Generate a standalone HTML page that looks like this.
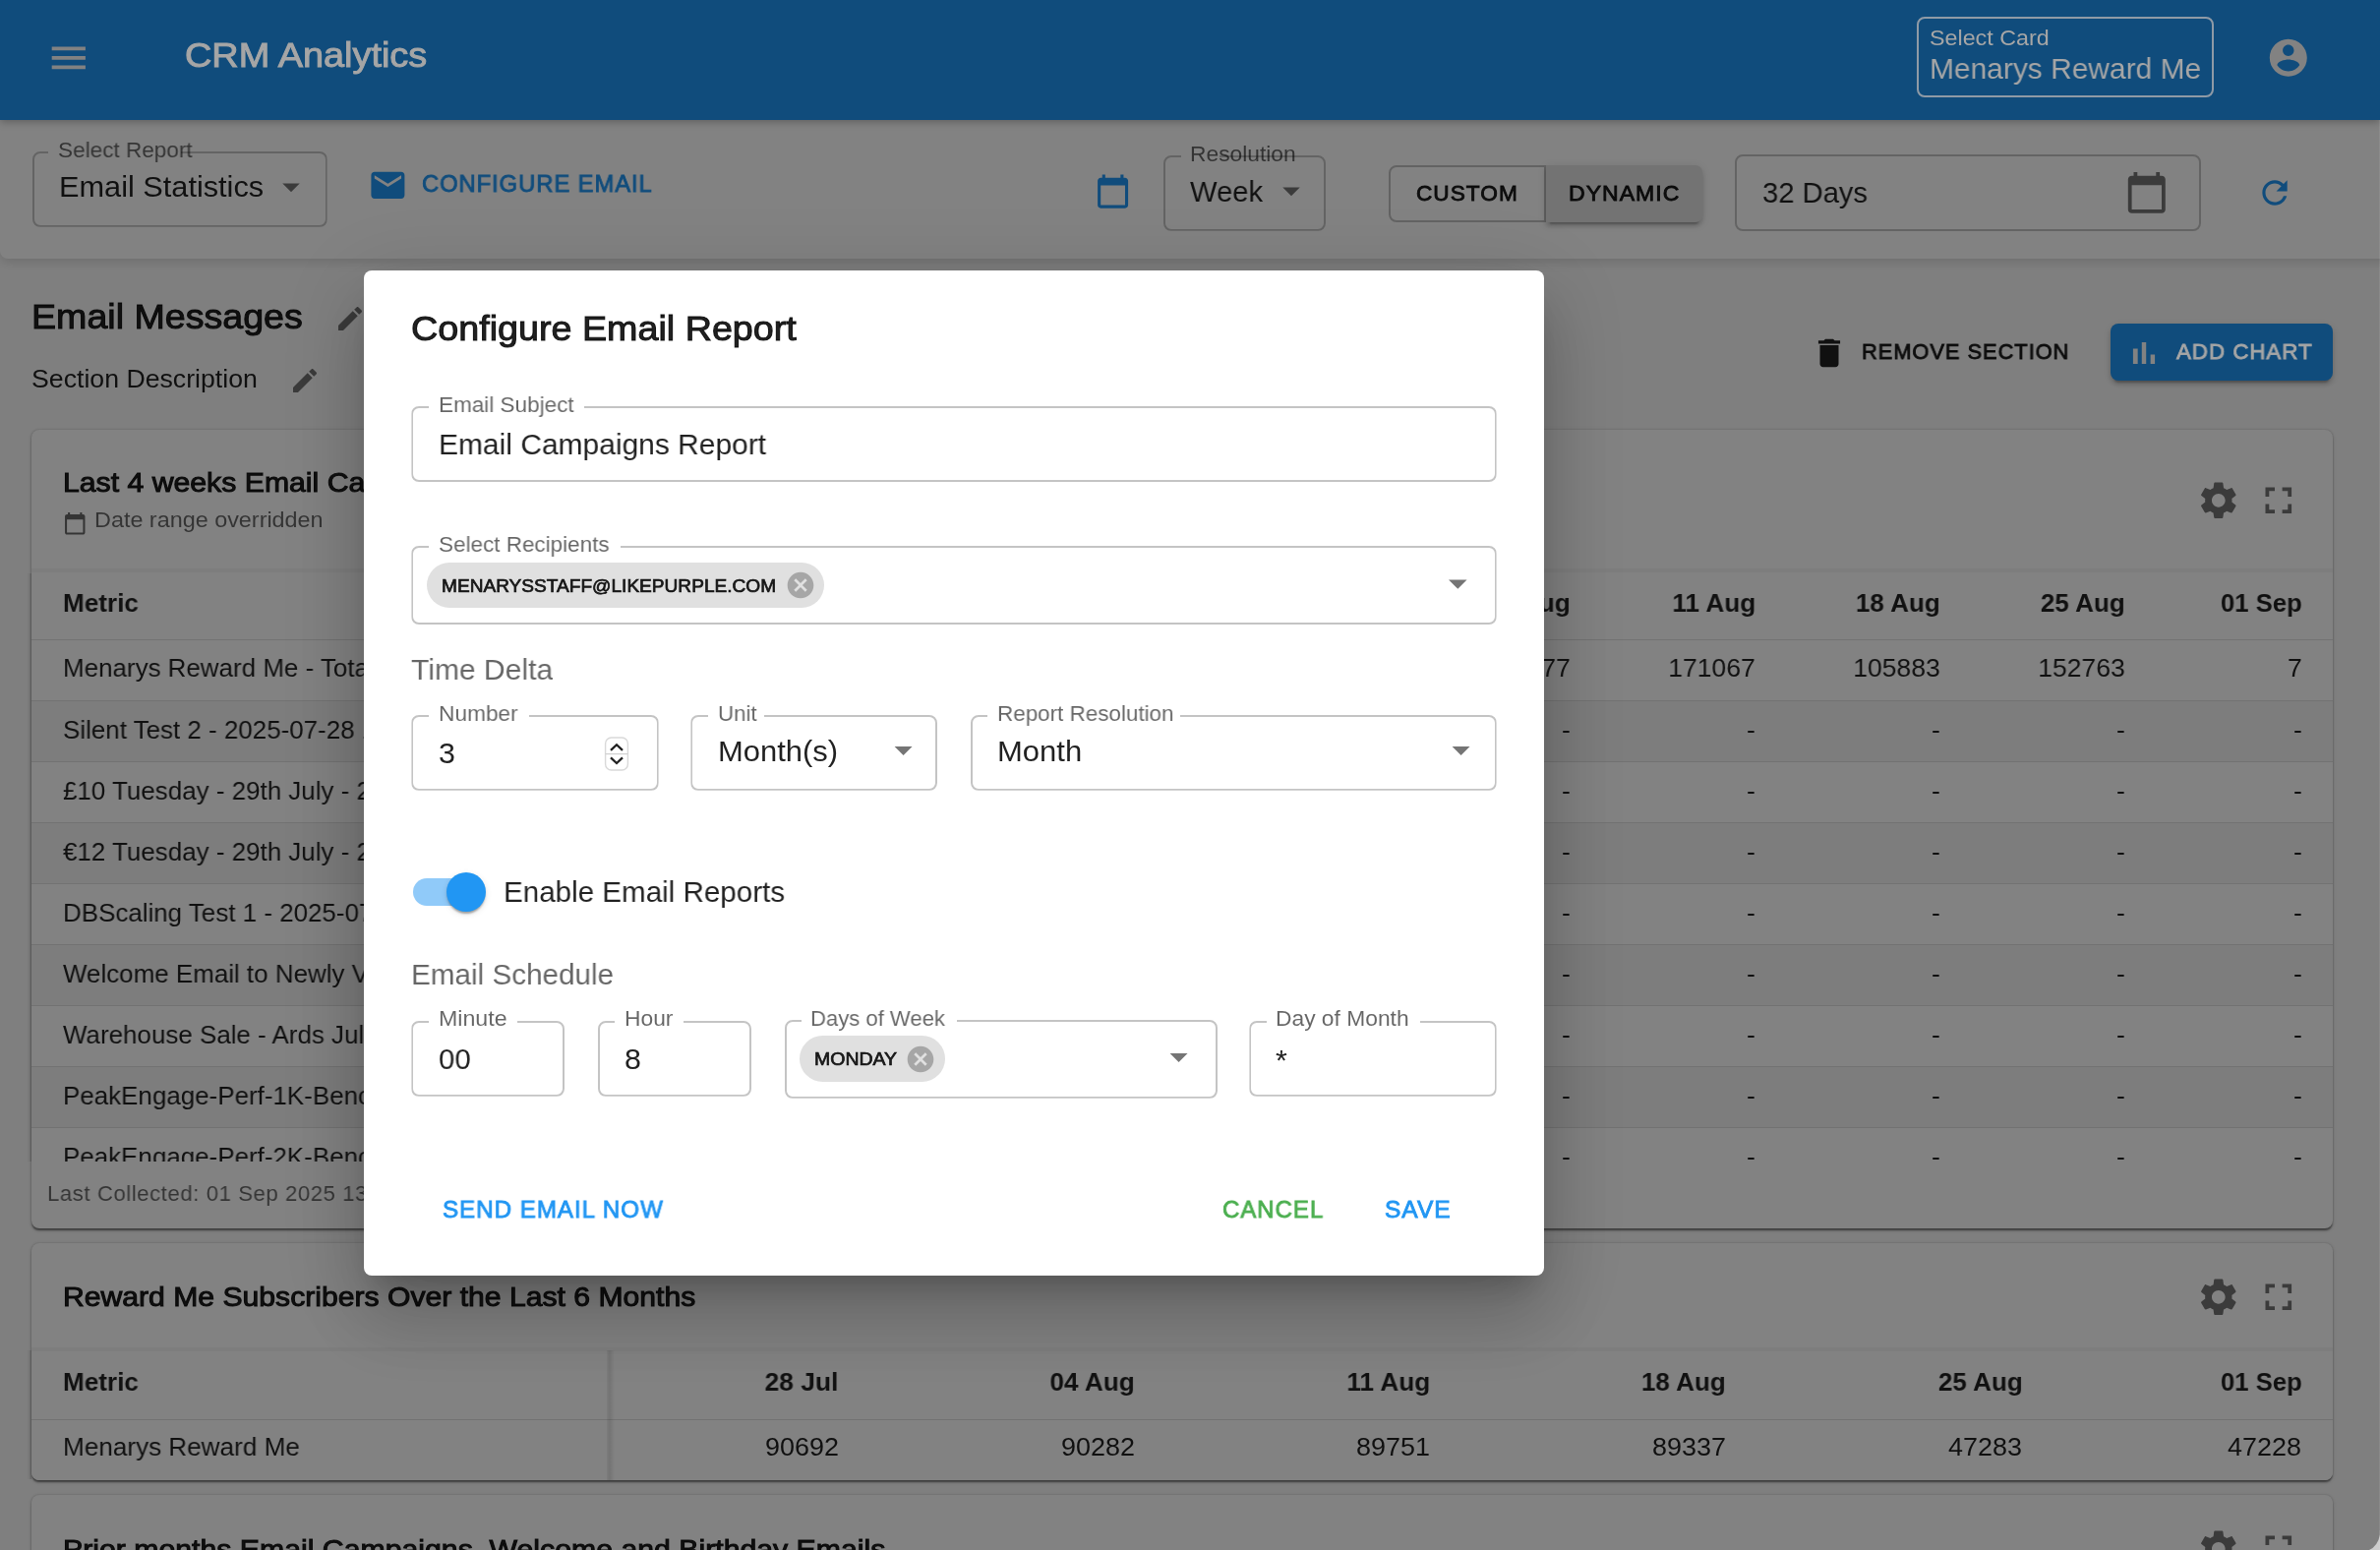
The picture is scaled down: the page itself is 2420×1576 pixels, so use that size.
<!DOCTYPE html>
<html lang="en"><head><meta charset="utf-8"><title>CRM Analytics</title><style>
html,body{margin:0;padding:0}
body{width:2420px;height:1576px;overflow:hidden;position:relative;background:#fafafa;font-family:"Liberation Sans",sans-serif}
#bg,#backdrop{position:absolute;left:0;top:0;width:2420px;height:1576px;overflow:hidden}
#backdrop{background:rgba(0,0,0,.492)}
div,svg,span{position:absolute}
.t{white-space:nowrap;line-height:1;display:block;will-change:transform}
.clip{overflow:hidden}
</style></head>
<body>
<div id="bg">
<div style="left:0.00px;top:122.00px;width:2440.00px;height:141.00px;background:#fff;border-radius:0 0 8px 8px;box-shadow:0 3px 12px 0 rgba(0,0,0,.15);"></div>
<div style="left:0.00px;top:0.00px;width:2420.00px;height:122.00px;background:#2196f3;box-shadow:0 2px 8px 0 rgba(0,0,0,.28);"></div>
<svg style="left:47.30px;top:35.60px" width="45.60" height="45.60" viewBox="0 0 24 24" fill="#fff"><path d="M3 18h18v-2H3v2zm0-5h18v-2H3v2zm0-7v2h18V6H3z"/></svg>
<svg style="left:2303.50px;top:35.50px" width="45.60" height="45.60" viewBox="0 0 24 24" fill="#fff"><path d="M12 2C6.48 2 2 6.48 2 12s4.48 10 10 10 10-4.48 10-10S17.52 2 12 2zm0 3c1.66 0 3 1.34 3 3s-1.34 3-3 3-3-1.34-3-3 1.34-3 3-3zm0 14.2c-2.5 0-4.71-1.28-6-3.22.03-1.99 4-3.08 6-3.08 1.99 0 5.97 1.09 6 3.08-1.29 1.94-3.5 3.22-6 3.22z"/></svg>
<div style="left:32.60px;top:153.80px;width:300.00px;height:77.00px;box-sizing:border-box;border:2px solid rgba(0,0,0,.23);border-radius:8px;clip-path:polygon(0 0,16.4px 0,16.4px 3px,151.4px 3px,151.4px 0,100% 0,100% 100%,0 100%);"></div>
<span class="t" style="top:140.70px;font-size:22.8px;color:rgba(0,0,0,.6);left:58.70px;transform-origin:0 0;transform:scaleX(0.9888);">Select Report</span>
<span class="t" style="top:174.27px;font-size:30.4px;color:rgba(0,0,0,.87);left:59.70px;transform-origin:0 0;transform:scaleX(1.0103);">Email Statistics</span>
<svg style="left:275.35px;top:168.90px" width="42.00" height="42.00" viewBox="0 0 24 24" fill="rgba(0,0,0,.54)"><path d="M7 10l5 5 5-5z"/></svg>
<svg style="left:373.60px;top:167.60px" width="40.80" height="40.80" viewBox="0 0 24 24" fill="#2196f3"><path d="M20 4H4c-1.1 0-1.99.9-1.99 2L2 18c0 1.1.9 2 2 2h16c1.1 0 2-.9 2-2V6c0-1.1-.9-2-2-2zm0 4l-8 5-8-5V6l8 5 8-5v2z"/></svg>
<span class="t" style="top:175.21px;font-size:24.56px;color:#2196f3;-webkit-text-stroke:0.85px;letter-spacing:1px;left:428.70px;transform-origin:0 0;transform:scaleX(0.9670);">CONFIGURE EMAIL</span>
<svg style="left:1112.90px;top:176.45px" width="37.20" height="37.20" viewBox="0 0 24 24" fill="#2196f3"><path d="M20 3h-1V1h-2v2H7V1H5v2H4c-1.1 0-2 .9-2 2v16c0 1.1.9 2 2 2h16c1.1 0 2-.9 2-2V5c0-1.1-.9-2-2-2zm0 18H4V8h16v13z"/></svg>
<div style="left:1183.00px;top:157.80px;width:165.00px;height:77.00px;box-sizing:border-box;border:2px solid rgba(0,0,0,.23);border-radius:8px;clip-path:polygon(0 0,18.0px 0,18.0px 3px,57.0px 3px,57.0px 0,100% 0,100% 100%,0 100%);"></div>
<span class="t" style="top:144.70px;font-size:22.8px;color:rgba(0,0,0,.6);left:1209.70px;transform-origin:0 0;transform:scaleX(0.9988);">Resolution</span>
<span class="t" style="top:178.87px;font-size:30.4px;color:rgba(0,0,0,.87);left:1209.70px;transform-origin:0 0;transform:scaleX(0.9598);">Week</span>
<svg style="left:1291.75px;top:172.90px" width="42.00" height="42.00" viewBox="0 0 24 24" fill="rgba(0,0,0,.54)"><path d="M7 10l5 5 5-5z"/></svg>
<div style="left:1412.00px;top:167.60px;width:160.00px;height:58.00px;box-sizing:border-box;border:2px solid rgba(0,0,0,.24);border-radius:8px 0 0 8px;"></div>
<div style="left:1572.00px;top:167.60px;width:159.30px;height:58.80px;background:#e2e2e2;border-radius:0 7px 7px 0;box-shadow:0 6px 2px -4px rgba(0,0,0,.2),0 4px 4px 0 rgba(0,0,0,.14),0 2px 10px 0 rgba(0,0,0,.12);"></div>
<span class="t" style="top:184.82px;font-size:22.66px;color:rgba(0,0,0,.87);-webkit-text-stroke:0.85px;letter-spacing:1px;left:1439.70px;transform-origin:0 0;transform:scaleX(0.9957);">CUSTOM</span>
<span class="t" style="top:184.82px;font-size:22.66px;color:rgba(0,0,0,.87);-webkit-text-stroke:0.85px;letter-spacing:1px;left:1595.10px;transform-origin:0 0;transform:scaleX(1.0170);">DYNAMIC</span>
<div style="left:1764.00px;top:157.20px;width:474.40px;height:77.60px;box-sizing:border-box;border:2px solid rgba(0,0,0,.23);border-radius:8px;"></div>
<span class="t" style="top:179.87px;font-size:30.4px;color:rgba(0,0,0,.87);left:1791.70px;transform-origin:0 0;transform:scaleX(0.9600);">32 Days</span>
<svg style="left:2160.20px;top:173.10px" width="45.60" height="45.60" viewBox="0 0 24 24" fill="rgba(0,0,0,.54)"><path d="M20 3h-1V1h-2v2H7V1H5v2H4c-1.1 0-2 .9-2 2v16c0 1.1.9 2 2 2h16c1.1 0 2-.9 2-2V5c0-1.1-.9-2-2-2zm0 18H4V8h16v13z"/></svg>
<svg style="left:2293.70px;top:176.70px" width="38.00" height="38.00" viewBox="0 0 24 24" fill="#2196f3"><path d="M17.65 6.35C16.2 4.9 14.21 4 12 4c-4.42 0-7.99 3.58-7.99 8s3.57 8 7.99 8c3.73 0 6.84-2.55 7.73-6h-2.08c-.82 2.33-3.04 4-5.65 4-3.31 0-6-2.69-6-6s2.69-6 6-6c1.66 0 3.14.69 4.22 1.78L13 11h7V4l-2.35 2.35z"/></svg>
<span class="t" style="top:304.86px;font-size:35.6px;color:rgba(0,0,0,.87);-webkit-text-stroke:1.0px;left:31.70px;transform-origin:0 0;transform:scaleX(1.0567);">Email Messages</span>
<svg style="left:339.60px;top:308.00px" width="32.00" height="32.00" viewBox="0 0 24 24" fill="rgba(0,0,0,.54)"><path d="M3 17.25V21h3.75L17.81 9.94l-3.75-3.75L3 17.25zM20.71 7.04c.39-.39.39-1.02 0-1.41l-2.34-2.34c-.39-.39-1.02-.39-1.41 0l-1.83 1.83 3.75 3.75 1.83-1.83z"/></svg>
<span class="t" style="top:372.48px;font-size:26.6px;color:rgba(0,0,0,.87);left:31.70px;transform-origin:0 0;transform:scaleX(1.0032);">Section Description</span>
<svg style="left:293.60px;top:371.00px" width="32.00" height="32.00" viewBox="0 0 24 24" fill="rgba(0,0,0,.54)"><path d="M3 17.25V21h3.75L17.81 9.94l-3.75-3.75L3 17.25zM20.71 7.04c.39-.39.39-1.02 0-1.41l-2.34-2.34c-.39-.39-1.02-.39-1.41 0l-1.83 1.83 3.75 3.75 1.83-1.83z"/></svg>
<svg style="left:1841.40px;top:339.75px" width="38.00" height="38.00" viewBox="0 0 24 24" fill="rgba(0,0,0,.87)"><path d="M6 19c0 1.1.9 2 2 2h8c1.1 0 2-.9 2-2V7H6v12zM19 4h-3.5l-1-1h-5l-1 1H5v2h14V4z"/></svg>
<span class="t" style="top:345.82px;font-size:22.66px;color:rgba(0,0,0,.87);-webkit-text-stroke:0.85px;letter-spacing:1px;left:1892.70px;transform-origin:0 0;transform:scaleX(0.9641);">REMOVE SECTION</span>
<div style="left:2146.00px;top:329.00px;width:226.00px;height:57.70px;background:#2196f3;border-radius:8px;box-shadow:0 6px 2px -4px rgba(0,0,0,.2),0 4px 4px 0 rgba(0,0,0,.14),0 2px 10px 0 rgba(0,0,0,.12);"></div>
<svg style="left:2161.10px;top:339.60px" width="38.00" height="38.00" viewBox="0 0 24 24" fill="#fff"><path d="M5 9.2h3V19H5zM10.6 5h2.8v14h-2.8zm5.6 8H19v6h-2.8z"/></svg>
<div style="left:32.00px;top:437.00px;width:2340.00px;height:812.00px;background:#fff;border-radius:8px;box-shadow:0 3.8px 1.9px -1.9px rgba(0,0,0,.3),0 1.9px 1.9px 0 rgba(0,0,0,.2),0 1.9px 5.7px 0 rgba(0,0,0,.14),0 0 1.5px .5px rgba(0,0,0,.05);"></div>
<span class="t" style="top:477.30px;font-size:28.0px;color:rgba(0,0,0,.87);-webkit-text-stroke:1.0px;left:64.00px;transform-origin:0 0;transform:scaleX(1.0790);">Last 4 weeks Email Ca</span>
<span class="t" style="top:477.30px;font-size:28.0px;color:rgba(0,0,0,.87);-webkit-text-stroke:1.0px;left:370.70px;transform-origin:0 0;">mpaigns</span>
<svg style="left:64.00px;top:520.00px" width="24.50" height="24.50" viewBox="0 0 24 24" fill="rgba(0,0,0,.6)"><path d="M20 3h-1V1h-2v2H7V1H5v2H4c-1.1 0-2 .9-2 2v16c0 1.1.9 2 2 2h16c1.1 0 2-.9 2-2V5c0-1.1-.9-2-2-2zm0 18H4V8h16v13z"/></svg>
<span class="t" style="top:518.38px;font-size:22px;color:rgba(0,0,0,.6);left:95.70px;transform-origin:0 0;transform:scaleX(1.0626);">Date range overridden</span>
<svg style="left:2233.20px;top:485.70px" width="45.60" height="45.60" viewBox="0 0 24 24" fill="rgba(0,0,0,.54)"><path d="M19.14 12.94c.04-.3.06-.61.06-.94 0-.32-.02-.64-.07-.94l2.03-1.58c.18-.14.23-.41.12-.61l-1.92-3.32c-.12-.22-.37-.29-.59-.22l-2.39.96c-.5-.38-1.03-.7-1.62-.94l-.36-2.54c-.04-.24-.24-.41-.48-.41h-3.84c-.24 0-.43.17-.47.41l-.36 2.54c-.59.24-1.13.57-1.62.94l-2.39-.96c-.22-.08-.47 0-.59.22L2.74 8.87c-.12.21-.08.47.12.61l2.03 1.58c-.05.3-.09.63-.09.94s.02.64.07.94l-2.03 1.58c-.18.14-.23.41-.12.61l1.92 3.32c.12.22.37.29.59.22l2.39-.96c.5.38 1.03.7 1.62.94l.36 2.54c.05.24.24.41.48.41h3.84c.24 0 .44-.17.47-.41l.36-2.54c.59-.24 1.13-.56 1.62-.94l2.39.96c.22.08.47 0 .59-.22l1.92-3.32c.12-.22.07-.47-.12-.61l-2.01-1.58zM12 15.6c-1.98 0-3.6-1.62-3.6-3.6s1.62-3.6 3.6-3.6 3.6 1.62 3.6 3.6-1.62 3.6-3.6 3.6z"/></svg>
<svg style="left:2294.40px;top:486.10px" width="45.60" height="45.60" viewBox="0 0 24 24" fill="rgba(0,0,0,.54)"><path d="M7 14H5v5h5v-2H7v-3zm-2-4h2V7h3V5H5v5zm12 7h-3v2h5v-5h-2v3zM14 5v2h3v3h2V5h-5z"/></svg>
<div class="clip" style="left:32px;top:578px;width:2340px;height:603px">
<div style="left:0.00px;top:0.20px;width:2340.00px;height:3.60px;background:#f6f6f6;"></div>
<div style="left:0.00px;top:3.80px;width:2340.00px;height:69.20px;background:#fff;border-bottom:1.9px solid #e0e0e0;box-sizing:border-box;"></div>
<div style="left:0.00px;top:73.00px;width:2340.00px;height:62.05px;background:#fff;border-bottom:1.9px solid #e0e0e0;box-sizing:border-box;"></div>
<div style="left:0.00px;top:135.05px;width:2340.00px;height:62.05px;background:#f5f5f5;border-bottom:1.9px solid #e0e0e0;box-sizing:border-box;"></div>
<div style="left:0.00px;top:197.10px;width:2340.00px;height:62.05px;background:#fff;border-bottom:1.9px solid #e0e0e0;box-sizing:border-box;"></div>
<div style="left:0.00px;top:259.15px;width:2340.00px;height:62.05px;background:#f5f5f5;border-bottom:1.9px solid #e0e0e0;box-sizing:border-box;"></div>
<div style="left:0.00px;top:321.20px;width:2340.00px;height:62.05px;background:#fff;border-bottom:1.9px solid #e0e0e0;box-sizing:border-box;"></div>
<div style="left:0.00px;top:383.25px;width:2340.00px;height:62.05px;background:#f5f5f5;border-bottom:1.9px solid #e0e0e0;box-sizing:border-box;"></div>
<div style="left:0.00px;top:445.30px;width:2340.00px;height:62.05px;background:#fff;border-bottom:1.9px solid #e0e0e0;box-sizing:border-box;"></div>
<div style="left:0.00px;top:507.35px;width:2340.00px;height:62.05px;background:#f5f5f5;border-bottom:1.9px solid #e0e0e0;box-sizing:border-box;"></div>
<div style="left:0.00px;top:569.40px;width:2340.00px;height:62.05px;background:#fff;border-bottom:1.9px solid #e0e0e0;box-sizing:border-box;"></div>
</div>
<div style="left:27.00px;top:583.00px;width:5.00px;height:598.00px;background:linear-gradient(90deg,rgba(0,0,0,0),rgba(0,0,0,.04) 50%,rgba(0,0,0,.17));"></div>
<span class="t" style="top:600.48px;font-size:26.6px;color:rgba(0,0,0,.87);font-weight:700;left:63.70px;transform-origin:0 0;transform:scaleX(0.9808);">Metric</span>
<span class="t" style="top:600.48px;font-size:26.6px;color:rgba(0,0,0,.87);font-weight:700;right:823.20px;transform-origin:100% 0;transform:scaleX(0.9834);">04 Aug</span>
<span class="t" style="top:600.48px;font-size:26.6px;color:rgba(0,0,0,.87);font-weight:700;right:635.20px;transform-origin:100% 0;transform:scaleX(0.9839);">11 Aug</span>
<span class="t" style="top:600.48px;font-size:26.6px;color:rgba(0,0,0,.87);font-weight:700;right:447.10px;transform-origin:100% 0;transform:scaleX(0.9787);">18 Aug</span>
<span class="t" style="top:600.48px;font-size:26.6px;color:rgba(0,0,0,.87);font-weight:700;right:259.00px;transform-origin:100% 0;transform:scaleX(0.9787);">25 Aug</span>
<span class="t" style="top:600.48px;font-size:26.6px;color:rgba(0,0,0,.87);font-weight:700;right:79.00px;transform-origin:100% 0;transform:scaleX(0.9656);">01 Sep</span>
<div class="clip" style="left:0;top:651.00px;width:2420px;height:62.05px">
<span class="t" style="top:15.48px;font-size:26.6px;color:rgba(0,0,0,.87);left:63.70px;transform-origin:0 0;transform:scaleX(.9755);">Menarys Reward Me - Total Emails</span>
<span class="t" style="top:15.48px;font-size:26.6px;color:rgba(0,0,0,.87);right:823.20px;transform-origin:100% 0;transform:scaleX(0.9967);">190377</span>
<span class="t" style="top:15.48px;font-size:26.6px;color:rgba(0,0,0,.87);right:635.20px;transform-origin:100% 0;transform:scaleX(0.9967);">171067</span>
<span class="t" style="top:15.48px;font-size:26.6px;color:rgba(0,0,0,.87);right:447.10px;transform-origin:100% 0;transform:scaleX(0.9967);">105883</span>
<span class="t" style="top:15.48px;font-size:26.6px;color:rgba(0,0,0,.87);right:259.00px;transform-origin:100% 0;transform:scaleX(0.9967);">152763</span>
<span class="t" style="top:15.48px;font-size:26.6px;color:rgba(0,0,0,.87);right:79.00px;transform-origin:100% 0;">7</span>
</div>
<div class="clip" style="left:0;top:713.05px;width:2420px;height:62.05px">
<span class="t" style="top:15.48px;font-size:26.6px;color:rgba(0,0,0,.87);left:63.70px;transform-origin:0 0;transform:scaleX(.9755);">Silent Test 2 - 2025-07-28 10:00</span>
<span class="t" style="top:15.48px;font-size:26.6px;color:rgba(0,0,0,.87);right:823.20px;transform-origin:100% 0;">-</span>
<span class="t" style="top:15.48px;font-size:26.6px;color:rgba(0,0,0,.87);right:635.20px;transform-origin:100% 0;">-</span>
<span class="t" style="top:15.48px;font-size:26.6px;color:rgba(0,0,0,.87);right:447.10px;transform-origin:100% 0;">-</span>
<span class="t" style="top:15.48px;font-size:26.6px;color:rgba(0,0,0,.87);right:259.00px;transform-origin:100% 0;">-</span>
<span class="t" style="top:15.48px;font-size:26.6px;color:rgba(0,0,0,.87);right:79.00px;transform-origin:100% 0;">-</span>
</div>
<div class="clip" style="left:0;top:775.10px;width:2420px;height:62.05px">
<span class="t" style="top:15.48px;font-size:26.6px;color:rgba(0,0,0,.87);left:63.70px;transform-origin:0 0;transform:scaleX(.9755);">£10 Tuesday - 29th July - 2025</span>
<span class="t" style="top:15.48px;font-size:26.6px;color:rgba(0,0,0,.87);right:823.20px;transform-origin:100% 0;">-</span>
<span class="t" style="top:15.48px;font-size:26.6px;color:rgba(0,0,0,.87);right:635.20px;transform-origin:100% 0;">-</span>
<span class="t" style="top:15.48px;font-size:26.6px;color:rgba(0,0,0,.87);right:447.10px;transform-origin:100% 0;">-</span>
<span class="t" style="top:15.48px;font-size:26.6px;color:rgba(0,0,0,.87);right:259.00px;transform-origin:100% 0;">-</span>
<span class="t" style="top:15.48px;font-size:26.6px;color:rgba(0,0,0,.87);right:79.00px;transform-origin:100% 0;">-</span>
</div>
<div class="clip" style="left:0;top:837.15px;width:2420px;height:62.05px">
<span class="t" style="top:15.48px;font-size:26.6px;color:rgba(0,0,0,.87);left:63.70px;transform-origin:0 0;transform:scaleX(.9755);">€12 Tuesday - 29th July - 2025</span>
<span class="t" style="top:15.48px;font-size:26.6px;color:rgba(0,0,0,.87);right:823.20px;transform-origin:100% 0;">-</span>
<span class="t" style="top:15.48px;font-size:26.6px;color:rgba(0,0,0,.87);right:635.20px;transform-origin:100% 0;">-</span>
<span class="t" style="top:15.48px;font-size:26.6px;color:rgba(0,0,0,.87);right:447.10px;transform-origin:100% 0;">-</span>
<span class="t" style="top:15.48px;font-size:26.6px;color:rgba(0,0,0,.87);right:259.00px;transform-origin:100% 0;">-</span>
<span class="t" style="top:15.48px;font-size:26.6px;color:rgba(0,0,0,.87);right:79.00px;transform-origin:100% 0;">-</span>
</div>
<div class="clip" style="left:0;top:899.20px;width:2420px;height:62.05px">
<span class="t" style="top:15.48px;font-size:26.6px;color:rgba(0,0,0,.87);left:63.70px;transform-origin:0 0;transform:scaleX(.9755);">DBScaling Test 1 - 2025-07-30</span>
<span class="t" style="top:15.48px;font-size:26.6px;color:rgba(0,0,0,.87);right:823.20px;transform-origin:100% 0;">-</span>
<span class="t" style="top:15.48px;font-size:26.6px;color:rgba(0,0,0,.87);right:635.20px;transform-origin:100% 0;">-</span>
<span class="t" style="top:15.48px;font-size:26.6px;color:rgba(0,0,0,.87);right:447.10px;transform-origin:100% 0;">-</span>
<span class="t" style="top:15.48px;font-size:26.6px;color:rgba(0,0,0,.87);right:259.00px;transform-origin:100% 0;">-</span>
<span class="t" style="top:15.48px;font-size:26.6px;color:rgba(0,0,0,.87);right:79.00px;transform-origin:100% 0;">-</span>
</div>
<div class="clip" style="left:0;top:961.25px;width:2420px;height:62.05px">
<span class="t" style="top:15.48px;font-size:26.6px;color:rgba(0,0,0,.87);left:63.70px;transform-origin:0 0;transform:scaleX(.9755);">Welcome Email to Newly Verified</span>
<span class="t" style="top:15.48px;font-size:26.6px;color:rgba(0,0,0,.87);right:823.20px;transform-origin:100% 0;">-</span>
<span class="t" style="top:15.48px;font-size:26.6px;color:rgba(0,0,0,.87);right:635.20px;transform-origin:100% 0;">-</span>
<span class="t" style="top:15.48px;font-size:26.6px;color:rgba(0,0,0,.87);right:447.10px;transform-origin:100% 0;">-</span>
<span class="t" style="top:15.48px;font-size:26.6px;color:rgba(0,0,0,.87);right:259.00px;transform-origin:100% 0;">-</span>
<span class="t" style="top:15.48px;font-size:26.6px;color:rgba(0,0,0,.87);right:79.00px;transform-origin:100% 0;">-</span>
</div>
<div class="clip" style="left:0;top:1023.30px;width:2420px;height:62.05px">
<span class="t" style="top:15.48px;font-size:26.6px;color:rgba(0,0,0,.87);left:63.70px;transform-origin:0 0;transform:scaleX(.9755);">Warehouse Sale - Ards July 2025</span>
<span class="t" style="top:15.48px;font-size:26.6px;color:rgba(0,0,0,.87);right:823.20px;transform-origin:100% 0;">-</span>
<span class="t" style="top:15.48px;font-size:26.6px;color:rgba(0,0,0,.87);right:635.20px;transform-origin:100% 0;">-</span>
<span class="t" style="top:15.48px;font-size:26.6px;color:rgba(0,0,0,.87);right:447.10px;transform-origin:100% 0;">-</span>
<span class="t" style="top:15.48px;font-size:26.6px;color:rgba(0,0,0,.87);right:259.00px;transform-origin:100% 0;">-</span>
<span class="t" style="top:15.48px;font-size:26.6px;color:rgba(0,0,0,.87);right:79.00px;transform-origin:100% 0;">-</span>
</div>
<div class="clip" style="left:0;top:1085.35px;width:2420px;height:62.05px">
<span class="t" style="top:15.48px;font-size:26.6px;color:rgba(0,0,0,.87);left:63.70px;transform-origin:0 0;transform:scaleX(.9755);">PeakEngage-Perf-1K-Benchmark</span>
<span class="t" style="top:15.48px;font-size:26.6px;color:rgba(0,0,0,.87);right:823.20px;transform-origin:100% 0;">-</span>
<span class="t" style="top:15.48px;font-size:26.6px;color:rgba(0,0,0,.87);right:635.20px;transform-origin:100% 0;">-</span>
<span class="t" style="top:15.48px;font-size:26.6px;color:rgba(0,0,0,.87);right:447.10px;transform-origin:100% 0;">-</span>
<span class="t" style="top:15.48px;font-size:26.6px;color:rgba(0,0,0,.87);right:259.00px;transform-origin:100% 0;">-</span>
<span class="t" style="top:15.48px;font-size:26.6px;color:rgba(0,0,0,.87);right:79.00px;transform-origin:100% 0;">-</span>
</div>
<div class="clip" style="left:0;top:1147.40px;width:2420px;height:33.60px">
<span class="t" style="top:15.48px;font-size:26.6px;color:rgba(0,0,0,.87);left:63.70px;transform-origin:0 0;transform:scaleX(.9755);">PeakEngage-Perf-2K-Benchmark</span>
<span class="t" style="top:15.48px;font-size:26.6px;color:rgba(0,0,0,.87);right:823.20px;transform-origin:100% 0;">-</span>
<span class="t" style="top:15.48px;font-size:26.6px;color:rgba(0,0,0,.87);right:635.20px;transform-origin:100% 0;">-</span>
<span class="t" style="top:15.48px;font-size:26.6px;color:rgba(0,0,0,.87);right:447.10px;transform-origin:100% 0;">-</span>
<span class="t" style="top:15.48px;font-size:26.6px;color:rgba(0,0,0,.87);right:259.00px;transform-origin:100% 0;">-</span>
<span class="t" style="top:15.48px;font-size:26.6px;color:rgba(0,0,0,.87);right:79.00px;transform-origin:100% 0;">-</span>
</div>
<span class="t" style="top:1201.70px;font-size:22.8px;color:rgba(0,0,0,.6);letter-spacing:0.6px;left:47.70px;transform-origin:0 0;transform:scaleX(.97);">Last Collected: 01 Sep 2025 13:05</span>
<div style="left:32.00px;top:1264.40px;width:2340.00px;height:240.20px;background:#fff;border-radius:8px;box-shadow:0 3.8px 1.9px -1.9px rgba(0,0,0,.3),0 1.9px 1.9px 0 rgba(0,0,0,.2),0 1.9px 5.7px 0 rgba(0,0,0,.14),0 0 1.5px .5px rgba(0,0,0,.05);"></div>
<span class="t" style="top:1305.30px;font-size:28.0px;color:rgba(0,0,0,.87);-webkit-text-stroke:1.0px;left:63.70px;transform-origin:0 0;transform:scaleX(1.0765);">Reward Me Subscribers Over the Last 6 Months</span>
<svg style="left:2233.20px;top:1295.60px" width="45.60" height="45.60" viewBox="0 0 24 24" fill="rgba(0,0,0,.54)"><path d="M19.14 12.94c.04-.3.06-.61.06-.94 0-.32-.02-.64-.07-.94l2.03-1.58c.18-.14.23-.41.12-.61l-1.92-3.32c-.12-.22-.37-.29-.59-.22l-2.39.96c-.5-.38-1.03-.7-1.62-.94l-.36-2.54c-.04-.24-.24-.41-.48-.41h-3.84c-.24 0-.43.17-.47.41l-.36 2.54c-.59.24-1.13.57-1.62.94l-2.39-.96c-.22-.08-.47 0-.59.22L2.74 8.87c-.12.21-.08.47.12.61l2.03 1.58c-.05.3-.09.63-.09.94s.02.64.07.94l-2.03 1.58c-.18.14-.23.41-.12.61l1.92 3.32c.12.22.37.29.59.22l2.39-.96c.5.38 1.03.7 1.62.94l.36 2.54c.05.24.24.41.48.41h3.84c.24 0 .44-.17.47-.41l.36-2.54c.59-.24 1.13-.56 1.62-.94l2.39.96c.22.08.47 0 .59-.22l1.92-3.32c.12-.22.07-.47-.12-.61l-2.01-1.58zM12 15.6c-1.98 0-3.6-1.62-3.6-3.6s1.62-3.6 3.6-3.6 3.6 1.62 3.6 3.6-1.62 3.6-3.6 3.6z"/></svg>
<svg style="left:2294.40px;top:1296.20px" width="45.60" height="45.60" viewBox="0 0 24 24" fill="rgba(0,0,0,.54)"><path d="M7 14H5v5h5v-2H7v-3zm-2-4h2V7h3V5H5v5zm12 7h-3v2h5v-5h-2v3zM14 5v2h3v3h2V5h-5z"/></svg>
<div style="left:32.00px;top:1370.40px;width:2340.00px;height:3.60px;background:#f6f6f6;"></div>
<div style="left:32.00px;top:1374.00px;width:2340.00px;height:69.60px;background:#fff;border-bottom:1.9px solid #e0e0e0;box-sizing:border-box;"></div>
<div style="left:32.00px;top:1443.60px;width:2340.00px;height:61.00px;background:#fff;border-radius:0 0 8px 8px;"></div>
<div style="left:617.30px;top:1373.00px;width:8.00px;height:131.60px;background:linear-gradient(90deg,rgba(0,0,0,.04),rgba(0,0,0,.11) 35%,rgba(0,0,0,0));"></div>
<div style="left:27.00px;top:1373.00px;width:5.00px;height:131.00px;background:linear-gradient(90deg,rgba(0,0,0,0),rgba(0,0,0,.04) 50%,rgba(0,0,0,.17));"></div>
<span class="t" style="top:1392.48px;font-size:26.6px;color:rgba(0,0,0,.87);font-weight:700;left:63.70px;transform-origin:0 0;transform:scaleX(0.9808);">Metric</span>
<span class="t" style="top:1458.48px;font-size:26.6px;color:rgba(0,0,0,.87);left:63.70px;transform-origin:0 0;transform:scaleX(0.9816);">Menarys Reward Me</span>
<span class="t" style="top:1392.48px;font-size:26.6px;color:rgba(0,0,0,.87);font-weight:700;right:1567.20px;transform-origin:100% 0;transform:scaleX(0.9926);">28 Jul</span>
<span class="t" style="top:1458.48px;font-size:26.6px;color:rgba(0,0,0,.87);right:1567.20px;transform-origin:100% 0;transform:scaleX(1.0126);">90692</span>
<span class="t" style="top:1392.48px;font-size:26.6px;color:rgba(0,0,0,.87);font-weight:700;right:1266.30px;transform-origin:100% 0;transform:scaleX(0.9834);">04 Aug</span>
<span class="t" style="top:1458.48px;font-size:26.6px;color:rgba(0,0,0,.87);right:1266.30px;transform-origin:100% 0;transform:scaleX(1.0126);">90282</span>
<span class="t" style="top:1392.48px;font-size:26.6px;color:rgba(0,0,0,.87);font-weight:700;right:965.70px;transform-origin:100% 0;transform:scaleX(0.9839);">11 Aug</span>
<span class="t" style="top:1458.48px;font-size:26.6px;color:rgba(0,0,0,.87);right:965.70px;transform-origin:100% 0;transform:scaleX(1.0126);">89751</span>
<span class="t" style="top:1392.48px;font-size:26.6px;color:rgba(0,0,0,.87);font-weight:700;right:665.00px;transform-origin:100% 0;transform:scaleX(0.9787);">18 Aug</span>
<span class="t" style="top:1458.48px;font-size:26.6px;color:rgba(0,0,0,.87);right:665.00px;transform-origin:100% 0;transform:scaleX(1.0126);">89337</span>
<span class="t" style="top:1392.48px;font-size:26.6px;color:rgba(0,0,0,.87);font-weight:700;right:363.70px;transform-origin:100% 0;transform:scaleX(0.9787);">25 Aug</span>
<span class="t" style="top:1458.48px;font-size:26.6px;color:rgba(0,0,0,.87);right:363.70px;transform-origin:100% 0;transform:scaleX(1.0126);">47283</span>
<span class="t" style="top:1392.48px;font-size:26.6px;color:rgba(0,0,0,.87);font-weight:700;right:79.70px;transform-origin:100% 0;transform:scaleX(0.9656);">01 Sep</span>
<span class="t" style="top:1458.48px;font-size:26.6px;color:rgba(0,0,0,.87);right:79.70px;transform-origin:100% 0;transform:scaleX(1.0126);">47228</span>
<div style="left:32.00px;top:1519.80px;width:2340.00px;height:200.00px;background:#fff;border-radius:8px;box-shadow:0 3.8px 1.9px -1.9px rgba(0,0,0,.3),0 1.9px 1.9px 0 rgba(0,0,0,.2),0 1.9px 5.7px 0 rgba(0,0,0,.14),0 0 1.5px .5px rgba(0,0,0,.05);"></div>
<span class="t" style="top:1562.30px;font-size:28.0px;color:rgba(0,0,0,.87);-webkit-text-stroke:1.0px;left:63.70px;transform-origin:0 0;transform:scaleX(1.0799);">Prior months Email Campaigns, Welcome and Birthday Emails</span>
<svg style="left:2233.20px;top:1551.60px" width="45.60" height="45.60" viewBox="0 0 24 24" fill="rgba(0,0,0,.54)"><path d="M19.14 12.94c.04-.3.06-.61.06-.94 0-.32-.02-.64-.07-.94l2.03-1.58c.18-.14.23-.41.12-.61l-1.92-3.32c-.12-.22-.37-.29-.59-.22l-2.39.96c-.5-.38-1.03-.7-1.62-.94l-.36-2.54c-.04-.24-.24-.41-.48-.41h-3.84c-.24 0-.43.17-.47.41l-.36 2.54c-.59.24-1.13.57-1.62.94l-2.39-.96c-.22-.08-.47 0-.59.22L2.74 8.87c-.12.21-.08.47.12.61l2.03 1.58c-.05.3-.09.63-.09.94s.02.64.07.94l-2.03 1.58c-.18.14-.23.41-.12.61l1.92 3.32c.12.22.37.29.59.22l2.39-.96c.5.38 1.03.7 1.62.94l.36 2.54c.05.24.24.41.48.41h3.84c.24 0 .44-.17.47-.41l.36-2.54c.59-.24 1.13-.56 1.62-.94l2.39.96c.22.08.47 0 .59-.22l1.92-3.32c.12-.22.07-.47-.12-.61l-2.01-1.58zM12 15.6c-1.98 0-3.6-1.62-3.6-3.6s1.62-3.6 3.6-3.6 3.6 1.62 3.6 3.6-1.62 3.6-3.6 3.6z"/></svg>
<svg style="left:2294.40px;top:1552.20px" width="45.60" height="45.60" viewBox="0 0 24 24" fill="rgba(0,0,0,.54)"><path d="M7 14H5v5h5v-2H7v-3zm-2-4h2V7h3V5H5v5zm12 7h-3v2h5v-5h-2v3zM14 5v2h3v3h2V5h-5z"/></svg>
</div>
<div id="backdrop"></div>
<div style="left:2418.70px;top:122.00px;width:1.30px;height:1454.00px;background:rgba(255,255,255,.07);"></div>
<div style="left:1949.00px;top:16.80px;width:302.00px;height:82.00px;box-sizing:border-box;border:2px solid #8f9aa6;border-radius:8px;"></div>
<span class="t" style="top:38.86px;font-size:35.6px;color:#a6a6a6;-webkit-text-stroke:1.0px;left:188.30px;transform-origin:0 0;transform:scaleX(1.0645);">CRM Analytics</span>
<span class="t" style="top:26.70px;font-size:22.8px;color:#a6a6a6;left:1961.70px;transform-origin:0 0;transform:scaleX(1.0212);">Select Card</span>
<span class="t" style="top:54.27px;font-size:30.4px;color:#a6a6a6;left:1961.70px;transform-origin:0 0;transform:scaleX(0.9848);">Menarys Reward Me</span>
<span class="t" style="top:345.82px;font-size:22.66px;color:#a6a6a6;-webkit-text-stroke:0.85px;letter-spacing:1px;left:2213.40px;transform-origin:0 0;transform:scaleX(0.9845);">ADD CHART</span>
<div style="left:370.00px;top:275.00px;width:1200.00px;height:1022.30px;background:#fff;border-radius:8px;box-shadow:0 21px 29px -13px rgba(0,0,0,.2),0 46px 72px 6px rgba(0,0,0,.14),0 17px 87px 15px rgba(0,0,0,.12);"></div>
<span class="t" style="top:316.86px;font-size:35.6px;color:rgba(0,0,0,.87);-webkit-text-stroke:1.0px;left:417.70px;transform-origin:0 0;transform:scaleX(1.0596);">Configure Email Report</span>
<div style="left:418.40px;top:412.80px;width:1103.20px;height:77.40px;box-sizing:border-box;border:2px solid rgba(0,0,0,.23);border-radius:8px;clip-path:polygon(0 0,17.6px 0,17.6px 3px,175.6px 3px,175.6px 0,100% 0,100% 100%,0 100%);"></div>
<span class="t" style="top:399.70px;font-size:22.8px;color:rgba(0,0,0,.6);left:445.70px;transform-origin:0 0;transform:scaleX(0.9871);">Email Subject</span>
<span class="t" style="top:436.27px;font-size:30.4px;color:rgba(0,0,0,.87);left:445.70px;transform-origin:0 0;transform:scaleX(0.9860);">Email Campaigns Report</span>
<div style="left:418.40px;top:554.80px;width:1103.20px;height:80.40px;box-sizing:border-box;border:2px solid rgba(0,0,0,.23);border-radius:8px;clip-path:polygon(0 0,17.6px 0,17.6px 3px,212.6px 3px,212.6px 0,100% 0,100% 100%,0 100%);"></div>
<span class="t" style="top:541.70px;font-size:22.8px;color:rgba(0,0,0,.6);left:445.70px;transform-origin:0 0;transform:scaleX(0.9854);">Select Recipients</span>
<div style="left:434.00px;top:571.60px;width:404.00px;height:46.90px;background:#e0e0e0;border-radius:24px;"></div>
<span class="t" style="top:586.70px;font-size:18.08px;color:rgba(0,0,0,.87);-webkit-text-stroke:0.7px;left:449.10px;transform-origin:0 0;transform:scaleX(1.0559);">MENARYSSTAFF@LIKEPURPLE.COM</span>
<svg style="left:798.30px;top:579.00px" width="32.00" height="32.00" viewBox="0 0 24 24" fill="rgba(0,0,0,.26)"><path d="M12 2C6.47 2 2 6.47 2 12s4.47 10 10 10 10-4.47 10-10S17.53 2 12 2zm5 13.59L15.59 17 12 13.41 8.41 17 7 15.59 10.59 12 7 8.41 8.41 7 12 10.59 15.59 7 17 8.41 13.41 12 17 15.59z"/></svg>
<svg style="left:1459.99px;top:570.82px" width="44.60" height="44.60" viewBox="0 0 24 24" fill="rgba(0,0,0,.54)"><path d="M7 10l5 5 5-5z"/></svg>
<span class="t" style="top:665.27px;font-size:30.4px;color:rgba(0,0,0,.6);left:417.70px;transform-origin:0 0;transform:scaleX(0.9884);">Time Delta</span>
<div style="left:418.40px;top:726.80px;width:251.20px;height:77.00px;box-sizing:border-box;border:2px solid rgba(0,0,0,.23);border-radius:8px;clip-path:polygon(0 0,17.6px 0,17.6px 3px,119.6px 3px,119.6px 0,100% 0,100% 100%,0 100%);"></div>
<span class="t" style="top:713.70px;font-size:22.8px;color:rgba(0,0,0,.6);left:445.70px;transform-origin:0 0;transform:scaleX(0.9937);">Number</span>
<span class="t" style="top:750.27px;font-size:30.4px;color:rgba(0,0,0,.87);left:445.70px;transform-origin:0 0;">3</span>
<svg style="left:614px;top:748px" width="26" height="37" viewBox="0 0 26 37" fill="none"><rect x="1.6" y="2" width="22.8" height="33" rx="6" fill="#fff" stroke="#d9d9d9" stroke-width="1.4"/><path d="M1.6 18.6h22.8" stroke="#d0d0d0" stroke-width="1.2"/><path d="M7 14.8l6-5.6 6 5.6M7 22.4l6 5.6 6-5.6" stroke="#222" stroke-width="2.3"/></svg>
<div style="left:702.40px;top:726.80px;width:250.60px;height:77.00px;box-sizing:border-box;border:2px solid rgba(0,0,0,.23);border-radius:8px;clip-path:polygon(0 0,17.6px 0,17.6px 3px,74.6px 3px,74.6px 0,100% 0,100% 100%,0 100%);"></div>
<span class="t" style="top:713.70px;font-size:22.8px;color:rgba(0,0,0,.6);left:729.70px;transform-origin:0 0;transform:scaleX(0.9756);">Unit</span>
<span class="t" style="top:748.27px;font-size:30.4px;color:rgba(0,0,0,.87);left:729.70px;transform-origin:0 0;transform:scaleX(1.0189);">Month(s)</span>
<svg style="left:897.00px;top:741.40px" width="43.20" height="43.20" viewBox="0 0 24 24" fill="rgba(0,0,0,.54)"><path d="M7 10l5 5 5-5z"/></svg>
<div style="left:986.60px;top:726.80px;width:535.00px;height:77.00px;box-sizing:border-box;border:2px solid rgba(0,0,0,.23);border-radius:8px;clip-path:polygon(0 0,17.4px 0,17.4px 3px,213.4px 3px,213.4px 0,100% 0,100% 100%,0 100%);"></div>
<span class="t" style="top:713.70px;font-size:22.8px;color:rgba(0,0,0,.6);left:1013.70px;transform-origin:0 0;transform:scaleX(0.9840);">Report Resolution</span>
<span class="t" style="top:748.27px;font-size:30.4px;color:rgba(0,0,0,.87);left:1013.70px;transform-origin:0 0;transform:scaleX(1.0202);">Month</span>
<svg style="left:1464.40px;top:741.40px" width="43.20" height="43.20" viewBox="0 0 24 24" fill="rgba(0,0,0,.54)"><path d="M7 10l5 5 5-5z"/></svg>
<div style="left:420.00px;top:893.00px;width:65.00px;height:28.00px;background:#90caf9;border-radius:14px;"></div>
<div style="left:454.00px;top:887.00px;width:40.00px;height:40.00px;background:#2196f3;border-radius:50%;box-shadow:0 4px 2px -2px rgba(0,0,0,.2),0 2px 2px 0 rgba(0,0,0,.14),0 2px 6px 0 rgba(0,0,0,.12);"></div>
<span class="t" style="top:891.27px;font-size:30.4px;color:rgba(0,0,0,.87);left:511.70px;transform-origin:0 0;transform:scaleX(0.9733);">Enable Email Reports</span>
<span class="t" style="top:975.27px;font-size:30.4px;color:rgba(0,0,0,.6);left:417.70px;transform-origin:0 0;transform:scaleX(0.9759);">Email Schedule</span>
<div style="left:418.40px;top:1037.80px;width:156.00px;height:77.00px;box-sizing:border-box;border:2px solid rgba(0,0,0,.23);border-radius:8px;clip-path:polygon(0 0,17.6px 0,17.6px 3px,107.6px 3px,107.6px 0,100% 0,100% 100%,0 100%);"></div>
<span class="t" style="top:1024.10px;font-size:22.8px;color:rgba(0,0,0,.6);left:445.70px;transform-origin:0 0;transform:scaleX(1.0173);">Minute</span>
<span class="t" style="top:1061.27px;font-size:30.4px;color:rgba(0,0,0,.87);left:445.70px;transform-origin:0 0;transform:scaleX(0.9658);">00</span>
<div style="left:607.60px;top:1037.80px;width:156.80px;height:77.00px;box-sizing:border-box;border:2px solid rgba(0,0,0,.23);border-radius:8px;clip-path:polygon(0 0,17.4px 0,17.4px 3px,87.4px 3px,87.4px 0,100% 0,100% 100%,0 100%);"></div>
<span class="t" style="top:1024.10px;font-size:22.8px;color:rgba(0,0,0,.6);left:634.70px;transform-origin:0 0;transform:scaleX(0.9953);">Hour</span>
<span class="t" style="top:1061.27px;font-size:30.4px;color:rgba(0,0,0,.87);left:634.70px;transform-origin:0 0;">8</span>
<div style="left:797.60px;top:1036.80px;width:440.40px;height:80.00px;box-sizing:border-box;border:2px solid rgba(0,0,0,.23);border-radius:8px;clip-path:polygon(0 0,17.4px 0,17.4px 3px,175.4px 3px,175.4px 0,100% 0,100% 100%,0 100%);"></div>
<span class="t" style="top:1023.70px;font-size:22.8px;color:rgba(0,0,0,.6);left:824.30px;transform-origin:0 0;transform:scaleX(0.9679);">Days of Week</span>
<div style="left:813.00px;top:1053.40px;width:148.00px;height:47.00px;background:#e0e0e0;border-radius:24px;"></div>
<span class="t" style="top:1068.30px;font-size:18.08px;color:rgba(0,0,0,.87);-webkit-text-stroke:0.7px;left:827.70px;transform-origin:0 0;transform:scaleX(1.0779);">MONDAY</span>
<svg style="left:920.00px;top:1061.00px" width="32.00" height="32.00" viewBox="0 0 24 24" fill="rgba(0,0,0,.26)"><path d="M12 2C6.47 2 2 6.47 2 12s4.47 10 10 10 10-4.47 10-10S17.53 2 12 2zm5 13.59L15.59 17 12 13.41 8.41 17 7 15.59 10.59 12 7 8.41 8.41 7 12 10.59 15.59 7 17 8.41 13.41 12 17 15.59z"/></svg>
<svg style="left:1177.00px;top:1053.40px" width="43.20" height="43.20" viewBox="0 0 24 24" fill="rgba(0,0,0,.54)"><path d="M7 10l5 5 5-5z"/></svg>
<div style="left:1270.40px;top:1037.80px;width:251.20px;height:77.00px;box-sizing:border-box;border:2px solid rgba(0,0,0,.23);border-radius:8px;clip-path:polygon(0 0,17.6px 0,17.6px 3px,173.6px 3px,173.6px 0,100% 0,100% 100%,0 100%);"></div>
<span class="t" style="top:1024.10px;font-size:22.8px;color:rgba(0,0,0,.6);left:1297.10px;transform-origin:0 0;transform:scaleX(0.9970);">Day of Month</span>
<span class="t" style="top:1061.77px;font-size:30.4px;color:rgba(0,0,0,.87);left:1297.20px;transform-origin:0 0;">*</span>
<span class="t" style="top:1218.21px;font-size:24.56px;color:#2196f3;-webkit-text-stroke:0.85px;letter-spacing:1px;left:449.70px;transform-origin:0 0;transform:scaleX(0.9835);">SEND EMAIL NOW</span>
<span class="t" style="top:1218.21px;font-size:24.56px;color:#4caf50;-webkit-text-stroke:0.85px;letter-spacing:1px;left:1242.70px;transform-origin:0 0;transform:scaleX(0.9775);">CANCEL</span>
<span class="t" style="top:1218.21px;font-size:24.56px;color:#2196f3;-webkit-text-stroke:0.85px;letter-spacing:1px;left:1408.30px;transform-origin:0 0;transform:scaleX(0.9937);">SAVE</span>
<svg style="left:2400px;top:1556px" width="20" height="20" viewBox="0 0 20 20"><path d="M20 4.5V20H9Q17.6 16.4 20 4.5z" fill="#cdcdcd"/><path d="M19.2 0H20V20H19.2z" fill="rgba(255,255,255,.08)"/></svg>
</body></html>
